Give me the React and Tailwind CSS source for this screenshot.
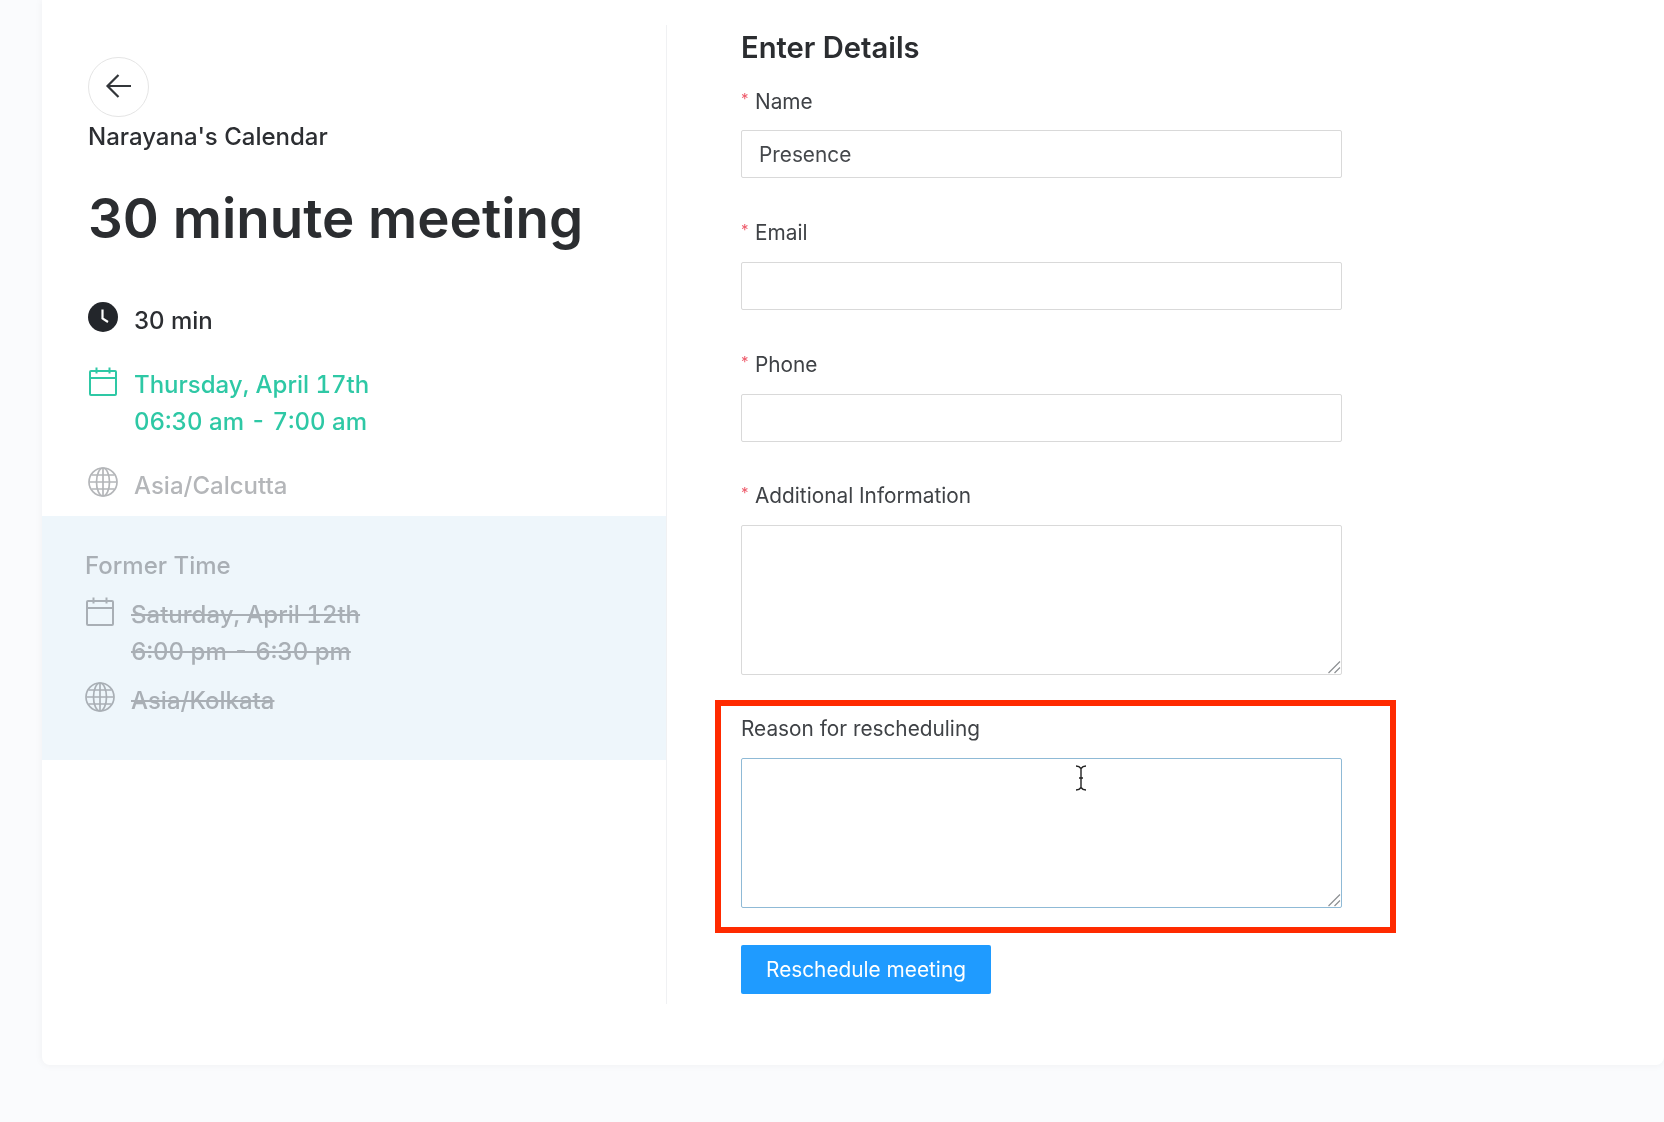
const font = { fontFamily: "Inter, 'Noto Sans', sans-serif" };

function Clock() {
  return (
    <svg viewBox="0 0 30 30" className="w-[30px] h-[30px] shrink-0">
      <circle cx="15" cy="15" r="15" fill="#23262b" />
      <path d="M14.5 7.5V16.5L20 20" fill="none" stroke="#fff" strokeWidth="2.2" />
    </svg>
  );
}

function Calendar({ color }) {
  return (
    <svg viewBox="0 0 30 30" className="w-[30px] h-[30px] shrink-0 mt-[1px]" fill="none" stroke={color} strokeWidth="2">
      <rect x="2" y="4" width="26" height="24" rx="1" />
      <path d="M2 11H28M8.5 0.5V6.5M21.5 0.5V6.5" />
    </svg>
  );
}

function Globe({ color }) {
  return (
    <svg viewBox="0 0 30 30" className="w-[30px] h-[30px] shrink-0" fill="none" stroke={color} strokeWidth="1.7">
      <circle cx="15" cy="15" r="14" />
      <ellipse cx="15" cy="15" rx="6.5" ry="14" />
      <path d="M15 1V29M1.5 15H28.5M3.5 8H26.5M3.5 22H26.5" />
    </svg>
  );
}

function Grip() {
  return (
    <svg viewBox="0 0 14 14" className="absolute right-[1px] bottom-[1px] w-[14px] h-[14px]" fill="none" stroke="#8d9093" strokeWidth="1.2">
      <path d="M1.5 13L13 1.5M7.5 13L13 7.5" />
    </svg>
  );
}

function Field({ label, children, className }) {
  return (
    <div className={className}>
      <div className="h-[30px] leading-[30px] text-[20.8px] text-[#3f4246] flex">
        <span className="w-[14px] text-[#ee5a6a] text-[15px] leading-[24px]">*</span>
        <span>{label}</span>
      </div>
      {children}
    </div>
  );
}

const inputCls =
  "block w-[601px] h-[48px] px-[17px] bg-white border border-[#d9d9d9] rounded-[2px] text-[20.8px] text-[#45484c] outline-none";

export default function App() {
  return (
    <div style={font} className="h-[1122px] overflow-hidden bg-[#fafbfd] pl-[42px] blur-[0.4px]">
      <div className="h-[1065px] bg-white rounded-b-lg shadow-[0_0_8px_rgba(0,0,0,0.05)] pt-[25px] flex">
        <div className="w-[625px] h-[979px] border-r border-[#f0f1f3] shrink-0">
          <div className="pl-[46px]">
            <button className="block mt-[32px] w-[61px] h-[60px] rounded-full border border-[#e5e5e5] flex items-center justify-center">
              <svg viewBox="0 0 28 28" className="w-[28px] h-[28px] mb-[2px]" fill="none" stroke="#33363a" strokeWidth="2.2">
                <path d="M26 14H3M13.5 3L2.5 14L13.5 25" />
              </svg>
            </button>
            <div className="mt-[4px] h-[32px] leading-[32px] text-[24px] font-medium text-[#2c2e32]">Narayana's Calendar</div>
            <h1 className="mt-[33px] h-[64px] leading-[64px] text-[54.7px] font-semibold text-[#2b2d30] whitespace-nowrap">30 minute meeting</h1>
            <div className="mt-[52px] flex gap-4 text-[24px] leading-[37px] font-medium text-[#2c2e32]">
              <Clock />
              <span>30 min</span>
            </div>
            <div className="mt-[27px] flex gap-4 text-[24px] leading-[37px] font-medium text-[#2ec8a5] tabular-nums">
              <Calendar color="#2ec8a5" />
              <div>
                <div>Thursday, April 17th</div>
                <div>06:30 am - 7:00 am</div>
              </div>
            </div>
            <div className="mt-[27px] flex gap-4 text-[24px] leading-[37px] font-medium text-[#b4b6b9]">
              <Globe color="#b4b6b9" />
              <span>Asia/Calcutta</span>
            </div>
          </div>
          <div className="mt-[12px] bg-[#eef6fb] pl-[43px] pt-[31px] pb-[41px] text-[#a9afb5] text-[24px] leading-[37px] font-medium tabular-nums">
            <div>Former Time</div>
            <div className="mt-[12px] flex gap-4">
              <Calendar color="#a9afb5" />
              <div className="line-through">
                <div>Saturday, April 12th</div>
                <div>6:00 pm - 6:30 pm</div>
              </div>
            </div>
            <div className="mt-[12px] flex gap-4">
              <Globe color="#a9afb5" />
              <span className="line-through">Asia/Kolkata</span>
            </div>
          </div>
        </div>

        <div className="pl-[74px]">
          <h2 className="h-[46px] leading-[46px] text-[29.2px] font-semibold text-[#2b2d30]">Enter Details</h2>
          <Field label="Name" className="mt-4">
            <input className={`${inputCls} mt-[13px]`} defaultValue="Presence" />
          </Field>
          <Field label="Email" className="mt-[40px]">
            <input className={`${inputCls} mt-[14px]`} />
          </Field>
          <Field label="Phone" className="mt-[40px]">
            <input className={`${inputCls} mt-[14px]`} />
          </Field>
          <Field label="Additional Information" className="mt-[39px]">
            <div className="relative w-[601px] h-[150px] mt-[14px]">
              <textarea className="block w-full h-full bg-white border border-[#d9d9d9] rounded-[2px] outline-none resize-none" />
              <Grip />
            </div>
          </Field>
          <div className="relative mt-[39px]">
            <div className="h-[30px] leading-[30px] text-[20.8px] text-[#3f4246]">Reason for rescheduling</div>
            <div className="relative w-[601px] h-[150px] mt-[14px]">
              <textarea className="block w-full h-full bg-white border border-[#8fbad6] rounded-[2px] outline-none resize-none" />
              <Grip />
            </div>
            <div className="absolute left-[-26px] top-[-14px] w-[681px] h-[233px] border-[6px] border-[#ff2a00]"></div>
            <svg viewBox="0 0 12 26" className="absolute left-[334px] top-[51px] w-[12px] h-[26px]" fill="none" stroke="#222" strokeWidth="1.4">
              <path d="M1 1C4 1 5 2 6 3.5C7 2 8 1 11 1M6 3.5V22.5M1 25C4 25 5 24 6 22.5C7 24 8 25 11 25M4 13H8" />
            </svg>
          </div>
          <button className="mt-[37px] block w-[250px] h-[49px] bg-[#1f9bff] rounded-[2px] text-white text-[20.8px]">Reschedule meeting</button>
        </div>
      </div>
    </div>
  );
}
